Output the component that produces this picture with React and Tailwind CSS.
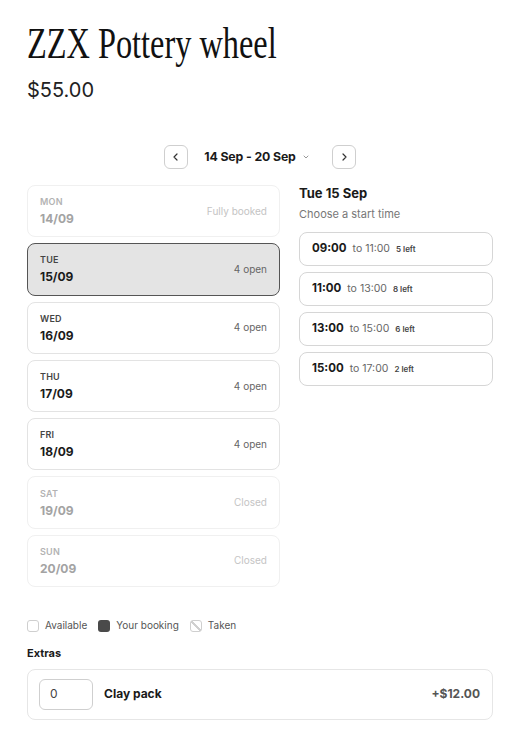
import React from 'react';

const days = [
  { dow: 'MON', date: '14/09', note: 'Fully booked', state: 'off' },
  { dow: 'TUE', date: '15/09', note: '4 open', state: 'selected' },
  { dow: 'WED', date: '16/09', note: '4 open', state: 'open' },
  { dow: 'THU', date: '17/09', note: '4 open', state: 'open' },
  { dow: 'FRI', date: '18/09', note: '4 open', state: 'open' },
  { dow: 'SAT', date: '19/09', note: 'Closed', state: 'off' },
  { dow: 'SUN', date: '20/09', note: 'Closed', state: 'off' },
];

const slots = [
  { start: '09:00', end: '11:00', left: '5 left' },
  { start: '11:00', end: '13:00', left: '8 left' },
  { start: '13:00', end: '15:00', left: '6 left' },
  { start: '15:00', end: '17:00', left: '2 left' },
];

function DayCard({ day }) {
  const off = day.state === 'off';
  const selected = day.state === 'selected';
  return (
    <div
      className={
        'h-[52.3px] rounded-lg border flex items-center justify-between px-3 ' +
        (selected ? 'bg-[#e4e4e4] border-[#555]' : off ? 'bg-white border-[#f0f0f0]' : 'bg-white border-[#e3e3e3]')
      }
    >
      <div className="flex flex-col gap-[5px]">
        <span className={'text-[9px] leading-[10px] font-semibold tracking-wide ' + (off ? 'text-[#b3b3b3]' : 'text-[#444]')}>{day.dow}</span>
        <span className={'text-[12px] leading-[13px] font-bold ' + (off ? 'text-[#a3a3a3]' : 'text-[#1a1a1a]')}>{day.date}</span>
      </div>
      <span className={'text-[10px] ' + (off ? 'text-[#c4c4c4]' : 'text-[#666]')}>{day.note}</span>
    </div>
  );
}

function Chevron({ dir }) {
  return (
    <svg width="10" height="10" viewBox="0 0 10 10" fill="none" stroke="#333" strokeWidth="1.2" strokeLinecap="round" strokeLinejoin="round">
      {dir === 'left' ? <path d="M6 2 3 5l3 3" /> : <path d="M4 2l3 3-3 3" />}
    </svg>
  );
}

export default function App() {
  return (
    <div className="min-h-[730px] bg-white px-[27px] pt-[18px] font-['Inter','Noto_Sans',sans-serif] text-[#1a1a1a]">
      {/* Header */}
      <h1 className="inline-block origin-left scale-x-[0.735] font-['Liberation_Serif',serif] text-[44px] leading-[52px] text-[#111] whitespace-nowrap">
        ZZX Pottery wheel
      </h1>
      <p className="mt-[6px] text-[20px] leading-[28px] text-[#222]">$55.00</p>

      {/* Week navigator */}
      <div className="mt-[41px] flex items-center justify-center">
        <button className="w-6 h-6 rounded-md border border-[#cfcfcf] flex items-center justify-center">
          <Chevron dir="left" />
        </button>
        <div className="ml-4 flex items-center gap-[6px]">
          <span className="text-[12.3px] font-bold tracking-[-0.01em] text-[#1a1a1a]">14 Sep - 20 Sep</span>
          <svg width="8" height="8" viewBox="0 0 8 8" fill="none" stroke="#999" strokeWidth="1" strokeLinecap="round">
            <path d="M2 3l2 2 2-2" />
          </svg>
        </div>
        <button className="ml-[22px] w-6 h-6 rounded-md border border-[#cfcfcf] flex items-center justify-center">
          <Chevron dir="right" />
        </button>
      </div>

      {/* Days + slots */}
      <div className="mt-[16px] flex gap-[19px]">
        <div className="w-[253px] flex flex-col gap-[6px]">
          {days.map((d) => (
            <DayCard key={d.dow} day={d} />
          ))}
        </div>
        <div className="flex-1">
          <h2 className="-mt-px text-[13px] font-bold leading-[18px]">Tue 15 Sep</h2>
          <p className="mt-[4px] text-[11px] text-[#777]">Choose a start time</p>
          <div className="mt-[9px] flex flex-col gap-[6px]">
            {slots.map((s) => (
              <div key={s.start} className="h-[34px] rounded-lg border border-[#d6d6d6] flex items-center px-3">
                <span className="text-[11.5px] font-bold text-[#1a1a1a]">{s.start}</span>
                <span className="ml-[6px] text-[10.5px] text-[#666]">to {s.end}</span>
                <span className="ml-[6px] text-[8px] font-semibold text-[#444]">{s.left}</span>
              </div>
            ))}
          </div>
        </div>
      </div>

      {/* Legend */}
      <div className="mt-[31px] flex items-center text-[10px] text-[#555]">
        <span className="w-[12px] h-[12px] rounded-[3px] border border-[#cfcfcf] bg-white" />
        <span className="ml-[6px]">Available</span>
        <span className="ml-[11px] w-[12px] h-[12px] rounded-[3px] bg-[#4a4a4a]" />
        <span className="ml-[6px]">Your booking</span>
        <span className="ml-[11px] w-[12px] h-[12px] rounded-[3px] border border-[#cfcfcf] bg-[linear-gradient(45deg,transparent_42%,#d0d0d0_42%,#d0d0d0_58%,transparent_58%)]" />
        <span className="ml-[6px]">Taken</span>
      </div>

      {/* Extras */}
      <h3 className="mt-[12px] text-[11px] font-bold">Extras</h3>
      <div className="mt-[7px] h-[51px] rounded-lg border border-[#e6e6e6] flex items-center pl-[11px] pr-[12px]">
        <div className="w-[54px] h-[31px] rounded-md border border-[#cfcfcf] flex items-center pl-[10px] text-[12px] text-[#444]">0</div>
        <span className="ml-[11px] text-[12px] font-bold">Clay pack</span>
        <span className="ml-auto text-[12px] font-bold text-[#555]">+$12.00</span>
      </div>
    </div>
  );
}
